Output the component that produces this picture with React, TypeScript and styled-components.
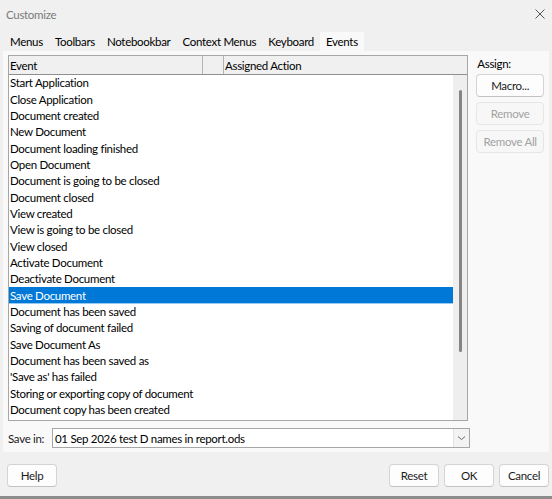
import * as React from 'react';
import styled, { createGlobalStyle } from 'styled-components';

const GlobalStyle = createGlobalStyle`
  html, body {
    margin: 0;
    padding: 0;
    background: #f0f0f0;
  }
  body {
    font-family: Lato, 'Noto Sans', 'Liberation Sans', sans-serif;
    font-size: 11.5px;
    letter-spacing: -0.3px;
    color: #000;
  }
`;

const Window = styled.div`
  width: 552px;
  height: 499px;
  box-sizing: border-box;
  display: flex;
  flex-direction: column;
  background: #f0f0f0;
  border-bottom: 3px solid #8c8c8c;
`;

const TitleBar = styled.div`
  height: 28px;
  flex: none;
  display: flex;
  align-items: center;
  justify-content: space-between;
  padding: 0 6px 0 6px;
  color: #7a7a7a;
`;

const TabStrip = styled.div`
  height: 23px;
  flex: none;
  display: flex;
  align-items: flex-end;
  padding-left: 4px;
`;

const Tab = styled.div<{ $active?: boolean }>`
  height: 19px;
  display: flex;
  align-items: center;
  padding: 0 6px;
  background: ${p => (p.$active ? '#f9f9f9' : 'transparent')};
  white-space: nowrap;
`;

const Panel = styled.div`
  height: 401px;
  flex: none;
  margin: 0 3px;
  box-sizing: border-box;
  padding: 4px 5px 4px 5px;
  background: #f9f9f9;
  display: flex;
  flex-direction: column;
`;

const MainRow = styled.div`
  display: flex;
  height: 366px;
`;

const Table = styled.div`
  width: 462px;
  height: 366px;
  box-sizing: border-box;
  border: 1px solid #a6a6a6;
  background: #fff;
  display: flex;
  flex-direction: column;
`;

const Header = styled.div`
  height: 18px;
  flex: none;
  display: flex;
  background: #f0f0f0;
  border-bottom: 1px solid #8f8f8f;
`;

const HeadCell = styled.div<{ $w?: number }>`
  ${p => (p.$w ? `width: ${p.$w}px; flex: none;` : 'flex: 1;')}
  box-sizing: border-box;
  padding-left: 1px;
  display: flex;
  align-items: center;
  border-right: 1px solid #b4b4b4;
  &:last-child {
    border-right: none;
  }
`;

const Body = styled.div`
  flex: 1;
  display: flex;
  min-height: 0;
`;

const List = styled.div`
  flex: 1;
  overflow: hidden;
`;

const Row = styled.div<{ $selected?: boolean }>`
  height: 16.35px;
  display: flex;
  align-items: center;
  padding: 0 0 1px 1px;
  white-space: nowrap;
  overflow: hidden;
  box-sizing: border-box;
  background: ${p => (p.$selected ? '#0078d7' : 'transparent')};
  color: ${p => (p.$selected ? '#fff' : '#000')};
  ${p => (p.$selected ? 'border-bottom: 1px solid #99c9ef; padding-bottom: 0;' : '')}
`;

const ScrollTrack = styled.div`
  width: 14px;
  flex: none;
  background: #eeeeee;
  position: relative;
`;

const ScrollThumb = styled.div`
  position: absolute;
  left: 6px;
  top: 15px;
  width: 3px;
  height: 262px;
  border-radius: 2px;
  background: #858585;
`;

const Side = styled.div`
  width: 68px;
  margin-left: 8px;
  display: flex;
  flex-direction: column;
  gap: 5px;
`;

const SideLabel = styled.div`
  height: 14px;
  display: flex;
  align-items: center;
  margin-top: 1px;
  margin-bottom: -1px;
  padding-left: 1px;
`;

const Button = styled.div<{ $disabled?: boolean; $w?: number }>`
  height: 23px;
  ${p => (p.$w ? `width: ${p.$w}px;` : '')}
  box-sizing: border-box;
  display: flex;
  align-items: center;
  justify-content: center;
  border-radius: 4px;
  border: 1px solid ${p => (p.$disabled ? '#e6e6e6' : '#d4d4d4')};
  ${p => (p.$disabled ? '' : 'border-bottom-color: #c2c2c2;')}
  background: ${p => (p.$disabled ? '#f7f7f7' : '#fdfdfd')};
  color: ${p => (p.$disabled ? '#a2a2a2' : '#1b1b1b')};
`;

const SaveRow = styled.div`
  margin-top: 7px;
  height: 20px;
  display: flex;
  align-items: center;
`;

const SaveLabel = styled.div`
  width: 44px;
  flex: none;
  color: #1b1b1b;
`;

const Combo = styled.div`
  width: 418px;
  height: 20px;
  box-sizing: border-box;
  border: 1px solid #a6a6a6;
  background: #fff;
  display: flex;
`;

const ComboText = styled.div`
  flex: 1;
  display: flex;
  align-items: center;
  padding-left: 2px;
  white-space: nowrap;
`;

const ComboArrow = styled.div`
  width: 15px;
  flex: none;
  display: flex;
  align-items: center;
  justify-content: center;
  background: #f3f3f3;
  border-left: 1px solid #e2e2e2;
`;

const Footer = styled.div`
  display: flex;
  padding: 12px 3px 0 7px;
  gap: 5px;
`;

const Spacer = styled.div`
  flex: 1;
`;

const events = [
  'Start Application',
  'Close Application',
  'Document created',
  'New Document',
  'Document loading finished',
  'Open Document',
  'Document is going to be closed',
  'Document closed',
  'View created',
  'View is going to be closed',
  'View closed',
  'Activate Document',
  'Deactivate Document',
  'Save Document',
  'Document has been saved',
  'Saving of document failed',
  'Save Document As',
  'Document has been saved as',
  "'Save as' has failed",
  'Storing or exporting copy of document',
  'Document copy has been created',
];

const tabs = ['Menus', 'Toolbars', 'Notebookbar', 'Context Menus', 'Keyboard', 'Events'];

const App: React.FC = () => {
  return (
    <Window>
      <GlobalStyle />
      <TitleBar>
        <span>Customize</span>
        <svg width="12" height="12" viewBox="0 0 12 12">
          <path d="M1.5 1.5 L10.5 10.5 M10.5 1.5 L1.5 10.5" stroke="#555" strokeWidth="1" fill="none" />
        </svg>
      </TitleBar>
      <TabStrip>
        {tabs.map(t => (
          <Tab key={t} $active={t === 'Events'}>
            {t}
          </Tab>
        ))}
      </TabStrip>
      <Panel>
        <MainRow>
          <Table>
            <Header>
              <HeadCell $w={194}>Event</HeadCell>
              <HeadCell $w={21} />
              <HeadCell>Assigned Action</HeadCell>
            </Header>
            <Body>
              <List>
                {events.map(e => (
                  <Row key={e} $selected={e === 'Save Document'}>
                    {e}
                  </Row>
                ))}
              </List>
              <ScrollTrack>
                <ScrollThumb />
              </ScrollTrack>
            </Body>
          </Table>
          <Side>
            <SideLabel>Assign:</SideLabel>
            <Button>Macro...</Button>
            <Button $disabled>Remove</Button>
            <Button $disabled>Remove All</Button>
          </Side>
        </MainRow>
        <SaveRow>
          <SaveLabel>Save in:</SaveLabel>
          <Combo>
            <ComboText>01 Sep 2026 test D names in report.ods</ComboText>
            <ComboArrow>
              <svg width="9" height="6" viewBox="0 0 9 6">
                <path d="M1 1.5 L4.5 4.5 L8 1.5" stroke="#666" strokeWidth="1" fill="none" />
              </svg>
            </ComboArrow>
          </Combo>
        </SaveRow>
      </Panel>
      <Footer>
        <Button $w={50}>Help</Button>
        <Spacer />
        <Button $w={50}>Reset</Button>
        <Button $w={50}>OK</Button>
        <Button $w={50}>Cancel</Button>
      </Footer>
    </Window>
  );
};

export default App;
